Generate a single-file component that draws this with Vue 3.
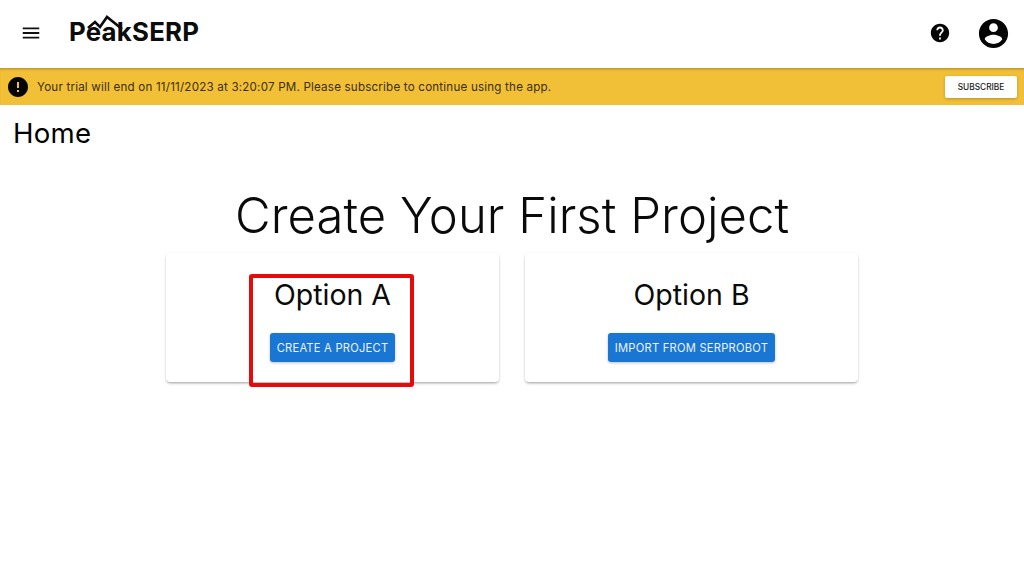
<script setup>
const options = [
  { title: 'Option A', action: 'CREATE A PROJECT', marked: true },
  { title: 'Option B', action: 'IMPORT FROM SERPROBOT', marked: false }
]
</script>

<template>
  <div class="page">
    <header class="topbar">
      <div class="topbar-left">
        <svg class="menu-icon" viewBox="0 0 24 24" width="22" height="22">
          <path d="M3 18h18v-2H3v2zm0-5h18v-2H3v2zm0-7v2h18V6H3z" />
        </svg>
        <div class="logo">
          <span>PeakSERP</span>
          <svg class="logo-peaks" viewBox="0 0 44 20" width="44" height="20">
            <path d="M5 16 L12 10 L17 15 L24 5 L39 17" />
          </svg>
        </div>
      </div>
      <div class="topbar-right">
        <svg class="help-icon" viewBox="0 0 24 24" width="22" height="22">
          <path d="M12 2C6.48 2 2 6.48 2 12s4.48 10 10 10 10-4.48 10-10S17.52 2 12 2zm1 17h-2v-2h2v2zm2.07-7.75-.9.92C13.45 12.9 13 13.5 13 15h-2v-.5c0-1.1.45-2.1 1.17-2.83l1.24-1.26c.37-.36.59-.86.59-1.41 0-1.1-.9-2-2-2s-2 .9-2 2H8c0-2.21 1.79-4 4-4s4 1.79 4 4c0 .88-.36 1.68-.93 2.25z" />
        </svg>
        <svg class="account-icon" viewBox="0 0 24 24" width="35" height="35">
          <path d="M12 2C6.48 2 2 6.48 2 12s4.48 10 10 10 10-4.48 10-10S17.52 2 12 2zm0 3c1.66 0 3 1.34 3 3s-1.34 3-3 3-3-1.34-3-3 1.34-3 3-3zm0 14.2c-2.5 0-4.71-1.28-6-3.22.03-1.99 4-3.08 6-3.08 1.99 0 5.97 1.09 6 3.08-1.29 1.94-3.5 3.22-6 3.22z" />
        </svg>
      </div>
    </header>

    <div class="trial-banner">
      <div class="trial-message">
        <svg viewBox="0 0 24 24" width="24" height="24">
          <path d="M12 2C6.48 2 2 6.48 2 12s4.48 10 10 10 10-4.48 10-10S17.52 2 12 2zm1 15h-2v-2h2v2zm0-4h-2V7h2v6z" />
        </svg>
        <span>Your trial will end on 11/11/2023 at 3:20:07 PM. Please subscribe to continue using the app.</span>
      </div>
      <button class="subscribe-btn">SUBSCRIBE</button>
    </div>

    <main class="content">
      <h2 class="page-title">Home</h2>
      <h1 class="headline">Create Your First Project</h1>
      <div class="options">
        <section v-for="option in options" :key="option.title" class="card">
          <h3>{{ option.title }}</h3>
          <button class="action-btn">{{ option.action }}</button>
          <div v-if="option.marked" class="highlight"></div>
        </section>
      </div>
    </main>
  </div>
</template>

<style scoped>
.page {
  width: 1024px;
  height: 576px;
  overflow: hidden;
  background: #fff;
  color: #000;
  font-family: Inter, "Liberation Sans", sans-serif;
}

.topbar {
  height: 68px;
  display: flex;
  align-items: center;
  justify-content: space-between;
  padding: 0 13px 2px 20px;
  box-sizing: border-box;
}

.topbar-left {
  display: flex;
  align-items: center;
  gap: 27px;
}

.menu-icon {
  fill: #111;
}

.logo {
  position: relative;
  margin-top: -3px;
  font-size: 25.8px;
  font-weight: 700;
  line-height: 30px;
  letter-spacing: 0.25px;
  color: #0c0c0c;
}

.logo-peaks {
  position: absolute;
  left: 14px;
  top: -5px;
  fill: none;
  stroke: #0c0c0c;
  stroke-width: 2.6;
}

.topbar-right {
  display: flex;
  align-items: center;
  gap: 25px;
}

.help-icon,
.account-icon {
  fill: #050505;
}

.trial-banner {
  height: 37px;
  box-sizing: border-box;
  background: #f2c037;
  box-shadow: inset 0 3px 3px -2px rgba(90, 70, 10, 0.45);
  display: flex;
  align-items: center;
  justify-content: space-between;
  padding: 0 7px 0 6px;
}

.trial-message {
  display: flex;
  align-items: center;
  gap: 7px;
  font-size: 11.6px;
  letter-spacing: 0.2px;
  color: #3a2f10;
}

.trial-message svg {
  fill: #050505;
}

.subscribe-btn {
  width: 72px;
  height: 22px;
  padding: 0;
  border: none;
  border-radius: 2px;
  background: #fff;
  box-shadow: 0 1px 3px rgba(0, 0, 0, 0.25);
  font-family: inherit;
  font-size: 8.3px;
  font-weight: 500;
  color: #222;
}

.content {
  display: flex;
  flex-direction: column;
  align-items: center;
}

.page-title {
  align-self: flex-start;
  margin: 11px 0 0 13px;
  font-size: 27.6px;
  line-height: 34px;
  font-weight: 400;
  letter-spacing: 0.25px;
}

.headline {
  margin: 29px 0 0;
  font-size: 49px;
  line-height: 74px;
  font-weight: 300;
  letter-spacing: 0.05px;
  color: #0a0a0a;
}

.options {
  display: flex;
  gap: 26px;
}

.card {
  position: relative;
  width: 333px;
  height: 129px;
  box-sizing: border-box;
  padding-top: 23px;
  display: flex;
  flex-direction: column;
  align-items: center;
  border-radius: 4px;
  background: #fff;
  box-shadow: 0 2px 3px -1px rgba(0, 0, 0, 0.3), 0 1px 3px rgba(0, 0, 0, 0.12);
}

.card h3 {
  margin: 0;
  font-size: 28.5px;
  line-height: 38px;
  font-weight: 400;
  color: #0a0a0a;
}

.action-btn {
  margin-top: 19px;
  height: 29px;
  padding: 0 7px;
  border: none;
  border-radius: 3px;
  background: #1976d2;
  color: #eaf3fc;
  box-shadow: 0 1px 3px rgba(0, 0, 0, 0.25);
  font-family: inherit;
  font-size: 11.2px;
  font-weight: 400;
  letter-spacing: 0.22px;
}

.highlight {
  position: absolute;
  left: 83px;
  top: 21px;
  width: 165px;
  height: 113px;
  box-sizing: border-box;
  border: 4px solid #e60a0a;
  border-radius: 3px;
}
</style>

<style>
body {
  background: #fff;
}
</style>
